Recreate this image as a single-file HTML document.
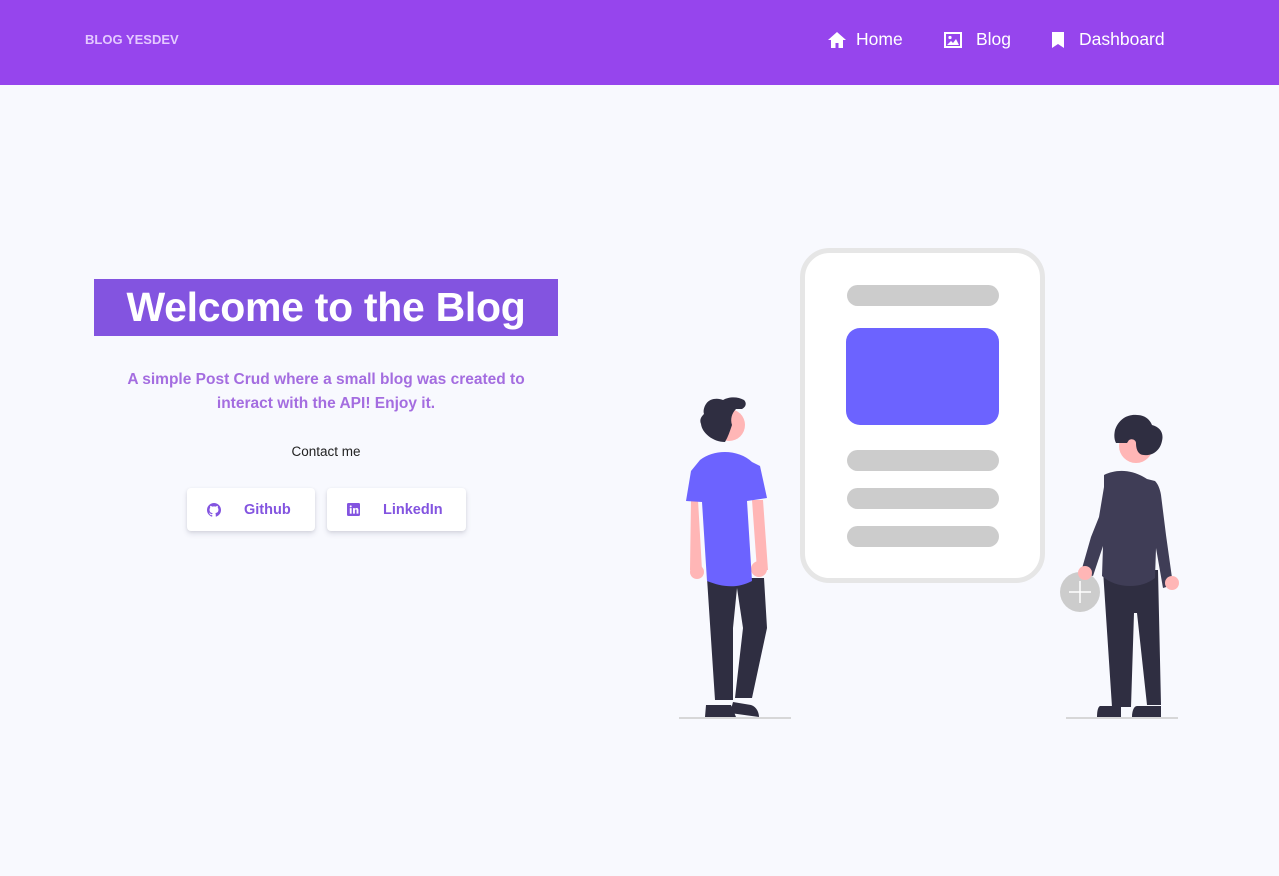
<!DOCTYPE html>
<html><head><meta charset="utf-8"><style>
*{margin:0;padding:0;box-sizing:border-box}
body{width:1279px;height:876px;background:#f8f9fe;font-family:"Liberation Sans",sans-serif;position:relative;overflow:hidden}
.nav{position:absolute;left:0;top:0;width:1279px;height:85px;background:#9645ed}
.brand{position:absolute;left:85px;top:32px;color:#e4c9ff;font-size:13px;font-weight:bold}
.nl{position:absolute;top:29px;color:#fff;font-size:17.5px;display:flex;align-items:center;gap:9px}
.title{position:absolute;left:94px;top:279px;width:464px;height:57px;background:#8354e0;color:#fff;font-size:41px;font-weight:bold;text-align:center;line-height:57px;letter-spacing:-0.3px}
.sub{position:absolute;left:94px;top:368px;width:464px;text-align:center;color:#a46de0;font-weight:bold;font-size:15.5px;line-height:24px}
.contact{position:absolute;left:94px;top:444px;width:464px;text-align:center;font-size:13.5px;color:#222}
.btn{position:absolute;top:488px;height:43px;background:#fff;border-radius:4px;box-shadow:0 3px 6px rgba(50,50,93,.12),0 1px 3px rgba(0,0,0,.08);color:#8354e0;font-weight:bold;font-size:14.5px;display:flex;align-items:center}
</style></head><body>
<div class="nav">
<div class="brand">BLOG YESDEV</div>
<div class="nl" style="left:827px"><svg width="20" height="18" viewBox="0 0 20 18"><path d="M10 1L1 9h3v8h4.5v-5h3v5H16V9h3z" fill="#fff"/></svg>Home</div>
<div class="nl" style="left:944px"><svg width="18" height="16" viewBox="0 0 18 16"><rect x="1" y="1" width="16" height="14" fill="none" stroke="#fff" stroke-width="2"/><circle cx="6" cy="5.5" r="1.6" fill="#fff"/><path d="M3 13l4-4 2 2 3-4 3 6z" fill="#fff"/></svg><span style="margin-left:5px">Blog</span></div>
<div class="nl" style="left:1051px"><svg width="14" height="18" viewBox="0 0 14 18"><path d="M1 1h12v16l-6-4-6 4z" fill="#fff"/></svg><span style="margin-left:5px">Dashboard</span></div>
</div>
<div class="title">Welcome to the Blog</div>
<div class="sub">A simple Post Crud where a small blog was created to<br>interact with the API! Enjoy it.</div>
<div class="contact">Contact me</div>
<div class="btn" style="left:187px;width:128px"><svg style="margin-left:20px" width="14" height="14" viewBox="0 0 16 16"><path fill="#8354e0" d="M8 0C3.6 0 0 3.6 0 8c0 3.5 2.3 6.5 5.5 7.6.4.1.5-.2.5-.4v-1.4c-2.2.5-2.7-1-2.700-1-.4-.9-.9-1.2-.9-1.2-.7-.5.1-.5.1-.5.8.1 1.2.8 1.2.8.7 1.2 1.9.9 2.3.7.1-.5.3-.9.5-1.1-1.8-.2-3.6-.9-3.6-4 0-.9.3-1.6.8-2.1-.1-.2-.4-1 .1-2.1 0 0 .7-.2 2.2.8.6-.2 1.3-.3 2-.3s1.400.1 2 .3c1.5-1 2.2-.8 2.2-.8.4 1.1.2 1.9.1 2.1.5.6.8 1.3.8 2.1 0 3.1-1.9 3.7-3.6 3.9.3.3.5.8.5 1.5v2.2c0 .2.1.5.6.4C13.7 14.5 16 11.5 16 8c0-4.4-3.6-8-8-8z"/></svg><span style="margin-left:23px">Github</span></div>
<div class="btn" style="left:327px;width:139px"><svg style="margin-left:20px" width="13" height="13" viewBox="0 0 14 14"><rect width="14" height="14" rx="1.5" fill="#8354e0"/><rect x="3" y="5.5" width="2" height="6" fill="#fff"/><circle cx="4" cy="3.6" r="1.1" fill="#fff"/><path d="M6.5 5.5h2v1c.5-.8 1.200-1.1 2-1.1 1.4 0 1.8.9 1.8 2.3v3.8h-2V8c0-.8-.2-1.2-.8-1.2s-1 .5-1 1.2v3.5h-2z" fill="#fff"/></svg><span style="margin-left:23px">LinkedIn</span></div>

<svg style="position:absolute;left:0;top:0" width="1279" height="876">
<rect x="802.5" y="250.5" width="240" height="330" rx="27" fill="#fff" stroke="#e6e6e6" stroke-width="5"/>
<rect x="847" y="285" width="152" height="21" rx="10.5" fill="#ccc"/>
<rect x="846" y="328" width="153" height="97" rx="14" fill="#6c63ff"/>
<rect x="847" y="450" width="152" height="21" rx="10.5" fill="#ccc"/>
<rect x="847" y="488" width="152" height="21" rx="10.5" fill="#ccc"/>
<rect x="847" y="526" width="152" height="21" rx="10.5" fill="#ccc"/>
<!-- left person -->
<line x1="679" y1="718" x2="791" y2="718" stroke="#ccc" stroke-width="1.5"/>
<path d="M691 500l-1 70h12l-4-70zM752 500l5 70h11l-5-70z" fill="#ffb6b6"/>
<circle cx="697" cy="572" r="7" fill="#ffb6b6"/><circle cx="759" cy="569" r="8" fill="#ffb6b6"/>
<path d="M707 578h57l3 50-15 70h-17l8-70-6-40-4 40v72h-18z" fill="#2f2e41"/>
<path d="M706 705h25l5 12h-31zM733 702l18 3c6 2 8 8 8 12l-29-4z" fill="#2f2e41"/>
<path d="M700 460c15-12 40-10 52 2l8 4 7 32-20 3 5 80c-15 8-30 6-45 0l-5-79-16-1 5-30z" fill="#6c63ff"/>
<circle cx="729" cy="425" r="16" fill="#ffb6b6"/>
<path d="M706 404c4-6 12-6 17-4 5-3 14-4 21 0 3 3 2 7-2 9h-6c-4 4-6 10-4 16-2 6-4 12-7 17-12 0-23-9-24-18-2-5 1-8 3-10-1-3 0-7 2-10z" fill="#2f2e41"/>
<!-- right person -->
<line x1="1066" y1="718" x2="1178" y2="718" stroke="#ccc" stroke-width="1.5"/>
<circle cx="1080" cy="592" r="20" fill="#ccc"/>
<path d="M1080 581v22M1069 592h22" stroke="#fff" stroke-width="1.5"/>
<path d="M1103 570h55l3 135h-14l-10-92-3 0-3 94h-19z" fill="#2f2e41"/>
<path d="M1100 706h21v11h-24c0-6 1-10 3-11zM1137 706h24v11h-29c0-6 2-11 5-11z" fill="#2f2e41"/>
<path d="M1104 475c12-6 28-6 43 4l8 2c3 3 5 8 6 14l5 40 7 50-10 3-7-40-1 30c-15 12-40 10-53-2l1-30-10 30-12-4 10-35 8-20 5-30z" fill="#3f3d56"/>
<circle cx="1085" cy="573" r="7" fill="#ffb6b6"/><circle cx="1172" cy="583" r="7" fill="#ffb6b6"/>
<circle cx="1136" cy="446" r="17" fill="#ffb6b6"/>
<path d="M1115 430c4-12 14-16 22-15 8 0 13 5 15 10 8 2 12 8 10 16-2 10-10 15-18 14-6 0-8-6-8-12 0-3-4-5-7-3l-2 3h-11c-2-4-2-8-1-13z" fill="#2f2e41"/>
</svg>
</body></html>
